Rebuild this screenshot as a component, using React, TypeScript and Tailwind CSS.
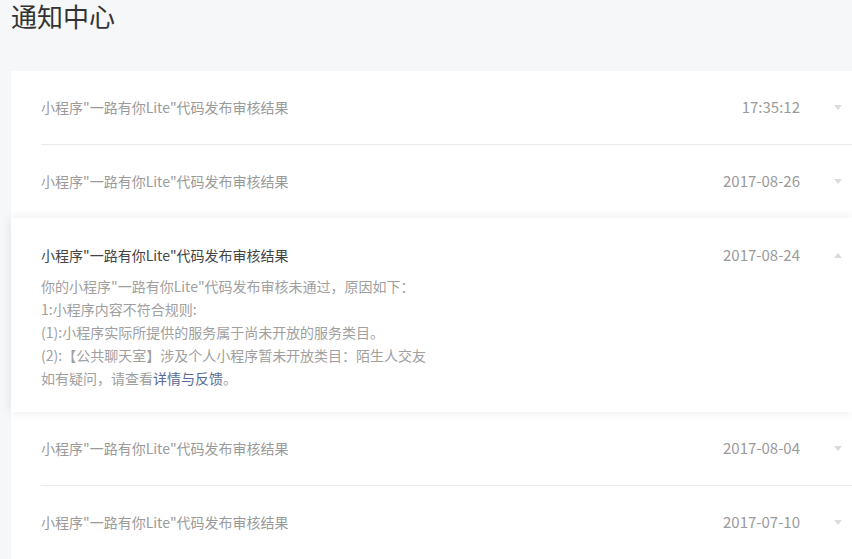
const TITLE = '小程序"一路有你Lite"代码发布审核结果';

type Notice = { id: number; date: string; open?: boolean };

const notices: Notice[] = [
  { id: 1, date: '17:35:12' },
  { id: 2, date: '2017-08-26' },
  { id: 3, date: '2017-08-24', open: true },
  { id: 4, date: '2017-08-04' },
  { id: 5, date: '2017-07-10' },
];

function Arrow({ up }: { up?: boolean }) {
  return (
    <svg width="8" height="5" viewBox="0 0 8 5" className="block">
      {up ? <path d="M0 5 L4 0 L8 5 Z" fill="#dcdcdc" /> : <path d="M0 0 L8 0 L4 5 Z" fill="#dcdcdc" />}
    </svg>
  );
}

function Row({ n }: { n: Notice }) {
  return (
    <div className="pl-[30px]">
      <div className="flex items-center h-[74px] border-b border-[#e9e9e9] pr-[10px]">
        <span className="flex-1 text-[14px] text-[#9a9a9a]">{TITLE}</span>
        <span className="text-[15px] text-[#9a9a9a]">{n.date}</span>
        <span className="ml-[34px]">
          <Arrow />
        </span>
      </div>
    </div>
  );
}

function OpenRow({ n }: { n: Notice }) {
  return (
    <div className="relative z-10 bg-white pl-[30px] pr-[10px] pt-[27px] pb-[22px] shadow-[0_0_10px_rgba(0,0,0,0.09)] -mt-px">
      <div className="flex items-center h-[20px]">
        <span className="flex-1 text-[14px] text-[#444]">{TITLE}</span>
        <span className="text-[15px] text-[#9a9a9a]">{n.date}</span>
        <span className="ml-[34px]">
          <Arrow up />
        </span>
      </div>
      <div className="mt-[10px] text-[14px] leading-[23px] text-[#a0a0a0]">
        <p>你的小程序"一路有你Lite"代码发布审核未通过，原因如下：</p>
        <p>1:小程序内容不符合规则:</p>
        <p>(1):小程序实际所提供的服务属于尚未开放的服务类目。</p>
        <p>(2):【公共聊天室】涉及个人小程序暂未开放类目：陌生人交友</p>
        <p>
          如有疑问，请查看<span className="text-[#576b95]">详情与反馈</span>。
        </p>
      </div>
    </div>
  );
}

export default function App() {
  return (
    <div
      className="min-h-screen bg-[#f6f7f9] pl-[11px] overflow-hidden"
      style={{ fontFamily: '"Noto Sans CJK SC", "Noto Sans", sans-serif' }}
    >
      <h1 className="text-[26px] leading-[32px] text-[#333]">通知中心</h1>
      <div className="mt-[39px] bg-white">
        {notices.map((n) => (n.open ? <OpenRow key={n.id} n={n} /> : <Row key={n.id} n={n} />))}
      </div>
    </div>
  );
}
